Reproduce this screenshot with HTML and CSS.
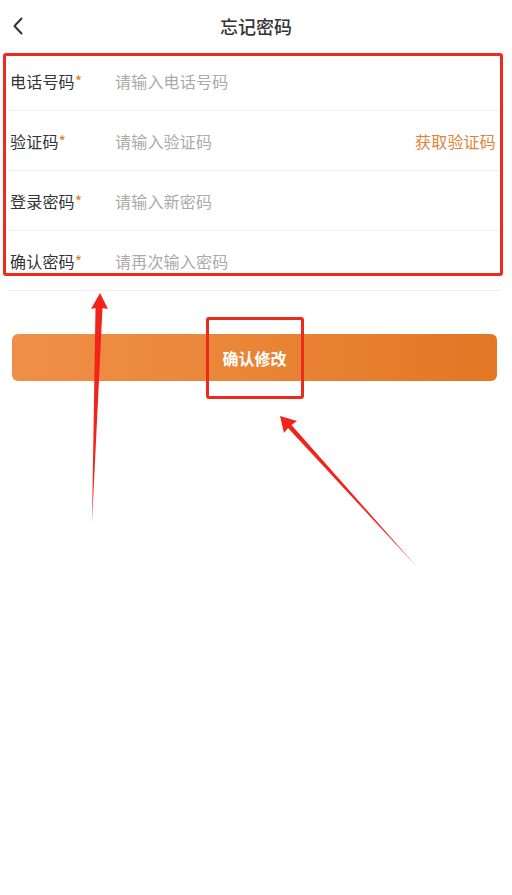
FILE: index.html
```html
<!DOCTYPE html>
<html lang="zh">
<head>
<meta charset="utf-8">
<title>忘记密码</title>
<link rel="stylesheet" href="styles.css">
</head>
<body>
<div class="page">
  <header class="header">
    <svg class="back" width="12" height="18" viewBox="0 0 12 18"><path d="M9.5 1.5 L2.5 9 L9.5 16.5" fill="none" stroke="#333" stroke-width="2" stroke-linecap="round" stroke-linejoin="round"/></svg>
    <h1 class="title">忘记密码</h1>
  </header>
  <div class="form">
    <div class="row"><span class="label">电话号码<i>*</i></span><span class="ph">请输入电话号码</span></div>
    <div class="row"><span class="label">验证码<i>*</i></span><span class="ph">请输入验证码</span><span class="code">获取验证码</span></div>
    <div class="row"><span class="label">登录密码<i>*</i></span><span class="ph">请输入新密码</span></div>
    <div class="row"><span class="label">确认密码<i>*</i></span><span class="ph">请再次输入密码</span></div>
  </div>
  <div class="btn">确认修改</div>

  <div class="mark mark-form"></div>
  <div class="mark mark-btn"></div>
  <svg class="arrows" width="512" height="895" viewBox="0 0 512 895">
    <polygon points="100,293 108,309 102.5,308 92,523 95.5,308 91,309" fill="#f2231b"/>
    <polygon points="280,416 297,421 291.5,425 417,567 288,428 284,433" fill="#f2231b"/>
  </svg>
</div>
</body>
</html>
```
FILE: styles.css
```css
* { box-sizing: border-box; margin: 0; padding: 0; }
html, body { background: #fff; }
body {
  font-family: "Noto Sans CJK SC", "Noto Sans", sans-serif;
  color: #333;
  width: 512px;
  height: 895px;
  overflow: hidden;
}
.page { position: relative; width: 512px; height: 895px; }
.header {
  height: 51px;
  display: flex;
  align-items: center;
  justify-content: center;
  position: relative;
}
.back { position: absolute; left: 12px; top: 17px; }
.title { font-size: 18px; font-weight: 500; color: #333; line-height: 1; }
.form { margin: 0 12px 0 8px; }
.row {
  height: 60px;
  border-bottom: 1px solid #eeeeee;
  display: flex;
  align-items: center;
  padding: 1px 4px 0 2px;
  font-size: 16px;
  letter-spacing: 0.2px;
}
.label { width: 105px; color: #333; }
.label i { font-style: normal; color: #e07c2c; }
.ph { color: #aaaaaa; flex: 1; }
.code { color: #e0843c; }
.btn {
  margin: 43px 15px 0 12px;
  height: 47px;
  border-radius: 6px;
  background: linear-gradient(90deg, #ef8f47 0%, #e98536 50%, #e27725 100%);
  color: #fff;
  font-size: 16px;
  font-weight: 700;
  display: flex;
  align-items: center;
  justify-content: center;
}
.mark {
  position: absolute;
  border: 3px solid #ee2a1f;
  border-radius: 3px;
}
.mark-form { left: 3px; top: 53px; width: 500px; height: 223px; }
.mark-btn { left: 206px; top: 317px; width: 98px; height: 82px; }
.arrows { position: absolute; left: 0; top: 0; pointer-events: none; }
```
